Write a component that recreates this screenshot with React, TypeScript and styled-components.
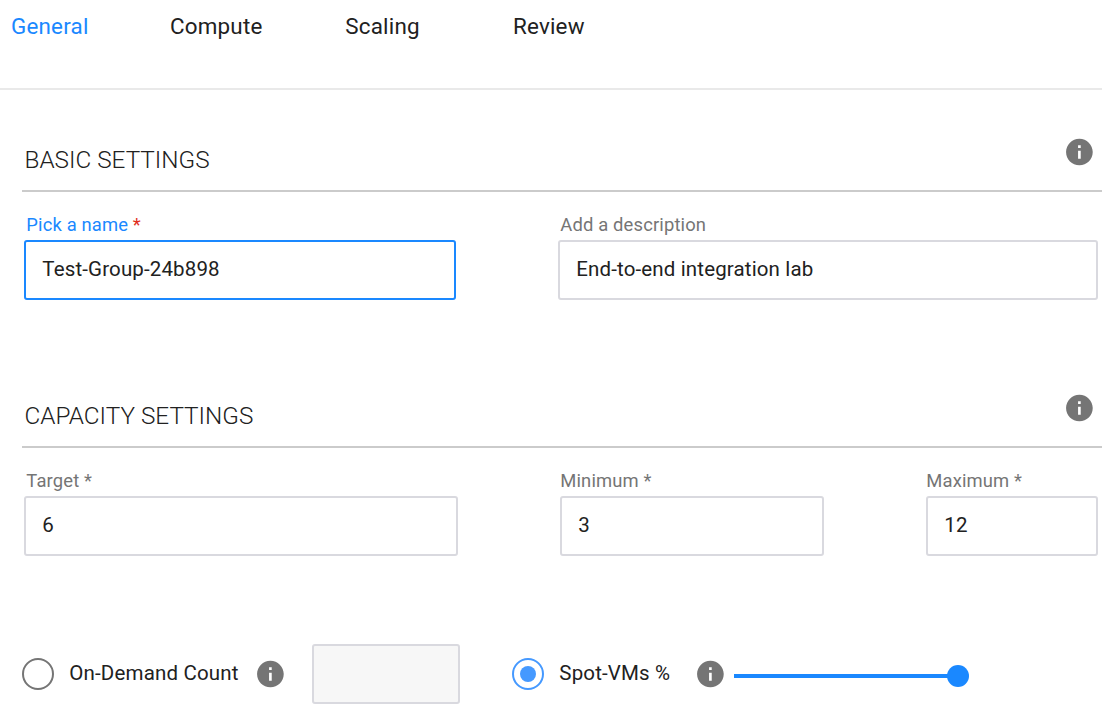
import { useState } from "react";
import styled, { createGlobalStyle } from "styled-components";

const GlobalStyle = createGlobalStyle`
  *, *::before, *::after { box-sizing: border-box; }
  body {
    margin: 0;
    background: #fff;
    color: #212121;
    font-family: Roboto, "Liberation Sans", sans-serif;
    font-size: 20.5px;
    overflow: hidden;
  }
`;

const Page = styled.main`
  width: 1102px;
  height: 723px;
  overflow: hidden;
`;

const Tabs = styled.nav`
  display: grid;
  grid-template-columns: 159px 175.3px 167.7px auto;
  height: 90px;
  padding: 11px 0 0 11px;
  border-bottom: 2px solid #e9e9e9;
`;

const Tab = styled.a<{ $active?: boolean }>`
  font-size: 22.4px;
  line-height: 30px;
  letter-spacing: 0.2px;
  color: ${(p) => (p.$active ? "#1a88ff" : "#212121")};
`;

const Section = styled.section<{ $height: number }>`
  height: ${(p) => p.$height}px;
  padding-left: 22px;
`;

const SectionHeader = styled.header`
  display: flex;
  justify-content: space-between;
  height: 102px;
  padding: 46px 6.6px 0 2.5px;
  border-bottom: 2px solid #cbcbcb;
`;

const SectionTitle = styled.h2`
  margin: 8px 0 0;
  font-size: 24.3px;
  font-weight: 300;
  line-height: 32px;
`;

const Fields = styled.div<{ $columns: string }>`
  display: grid;
  grid-template-columns: ${(p) => p.$columns};
  justify-content: space-between;
  padding: 20px 4px 0 2px;
`;

const Field = styled.label`
  display: flex;
  flex-direction: column;
`;

const Label = styled.span<{ $active?: boolean; $flush?: boolean }>`
  height: 28px;
  padding-left: ${(p) => (p.$flush ? 0.3 : 2.3)}px;
  font-size: 18.4px;
  line-height: 26px;
  letter-spacing: 0.15px;
  color: ${(p) => (p.$active ? "#1a88ff" : "#757575")};
`;

const Required = styled.span`
  color: #e02d1b;
`;

const Input = styled.input<{ $active?: boolean }>`
  width: 100%;
  height: 60px;
  padding: 0 16px 2px 16.3px;
  border: 2px solid ${(p) => (p.$active ? "#1a88ff" : "#d9d9df")};
  border-radius: 3px;
  outline: none;
  background: #fff;
  color: #212121;
  font: inherit;
  letter-spacing: 0.14px;

  &:disabled {
    background: #f7f7f7;
  }
`;

const Allocation = styled.div`
  display: flex;
  align-items: center;
  height: 60px;
  padding-left: 22px;
`;

const Option = styled.label<{ $width: number }>`
  display: flex;
  align-items: center;
  width: ${(p) => p.$width}px;
  gap: 15.3px;
  white-space: nowrap;
`;

const OptionText = styled.span`
  line-height: 30px;
  padding-bottom: 2px;
  letter-spacing: 0.16px;
`;

const Radio = styled.input`
  display: grid;
  place-items: center;
  flex: none;
  width: 32px;
  height: 32px;
  margin: 0;
  appearance: none;
  border: 2px solid #757575;
  border-radius: 50%;

  &:checked {
    border-color: #4599ff;
  }

  &:checked::before {
    content: "";
    width: 16px;
    height: 16px;
    border-radius: 50%;
    background: #4599ff;
  }
`;

const CountBox = styled.div`
  width: 148px;
  margin: 0 52px 0 26px;
`;

const Slider = styled.div`
  display: flex;
  align-items: center;
  width: 235.2px;
  height: 23px;
  margin: 4px 0 0 8px;
`;

const Track = styled.div`
  flex: 1;
  height: 4px;
  background: #1a88ff;
`;

const Thumb = styled.div`
  width: 22.4px;
  height: 22.4px;
  margin-left: -1px;
  border-radius: 50%;
  background: #1a88ff;
`;

const IconSvg = styled.svg`
  display: block;
  flex: none;
  width: 32px;
  height: 32px;
  fill: #757575;
`;

function InfoIcon() {
  return (
    <IconSvg viewBox="0 0 24 24" aria-hidden="true">
      <path
        transform="translate(0.3 0)"
        d="M12 2C6.48 2 2 6.48 2 12s4.48 10 10 10 10-4.48 10-10S17.52 2 12 2zm1 15h-2v-6h2v6zm0-8h-2V7h2v2z"
      />
    </IconSvg>
  );
}

const tabs = ["General", "Compute", "Scaling", "Review"];

export default function App() {
  const [mode, setMode] = useState("spot");

  return (
    <Page>
      <GlobalStyle />
      <Tabs>
        {tabs.map((tab, i) => (
          <Tab key={tab} $active={i === 0}>
            {tab}
          </Tab>
        ))}
      </Tabs>

      <Section $height={256}>
        <SectionHeader>
          <SectionTitle>BASIC SETTINGS</SectionTitle>
          <InfoIcon />
        </SectionHeader>
        <Fields $columns="432px 540px">
          <Field>
            <Label $active>
              Pick a name <Required>*</Required>
            </Label>
            <Input $active defaultValue="Test-Group-24b898" />
          </Field>
          <Field>
            <Label>Add a description</Label>
            <Input defaultValue="End-to-end integration lab" />
          </Field>
        </Fields>
      </Section>

      <Section $height={298}>
        <SectionHeader>
          <SectionTitle>CAPACITY SETTINGS</SectionTitle>
          <InfoIcon />
        </SectionHeader>
        <Fields $columns="434px 264px 172px">
          <Field>
            <Label>Target *</Label>
            <Input defaultValue="6" />
          </Field>
          <Field>
            <Label $flush>Minimum *</Label>
            <Input defaultValue="3" />
          </Field>
          <Field>
            <Label $flush>Maximum *</Label>
            <Input defaultValue="12" />
          </Field>
        </Fields>
      </Section>

      <Allocation>
        <Option $width={232}>
          <Radio type="radio" checked={mode === "count"} onChange={() => setMode("count")} />
          <OptionText>On-Demand Count</OptionText>
        </Option>
        <InfoIcon />
        <CountBox>
          <Input disabled={mode !== "count"} />
        </CountBox>
        <Option $width={182}>
          <Radio type="radio" checked={mode === "spot"} onChange={() => setMode("spot")} />
          <OptionText>Spot-VMs %</OptionText>
        </Option>
        <InfoIcon />
        <Slider>
          <Track />
          <Thumb />
        </Slider>
      </Allocation>
    </Page>
  );
}
